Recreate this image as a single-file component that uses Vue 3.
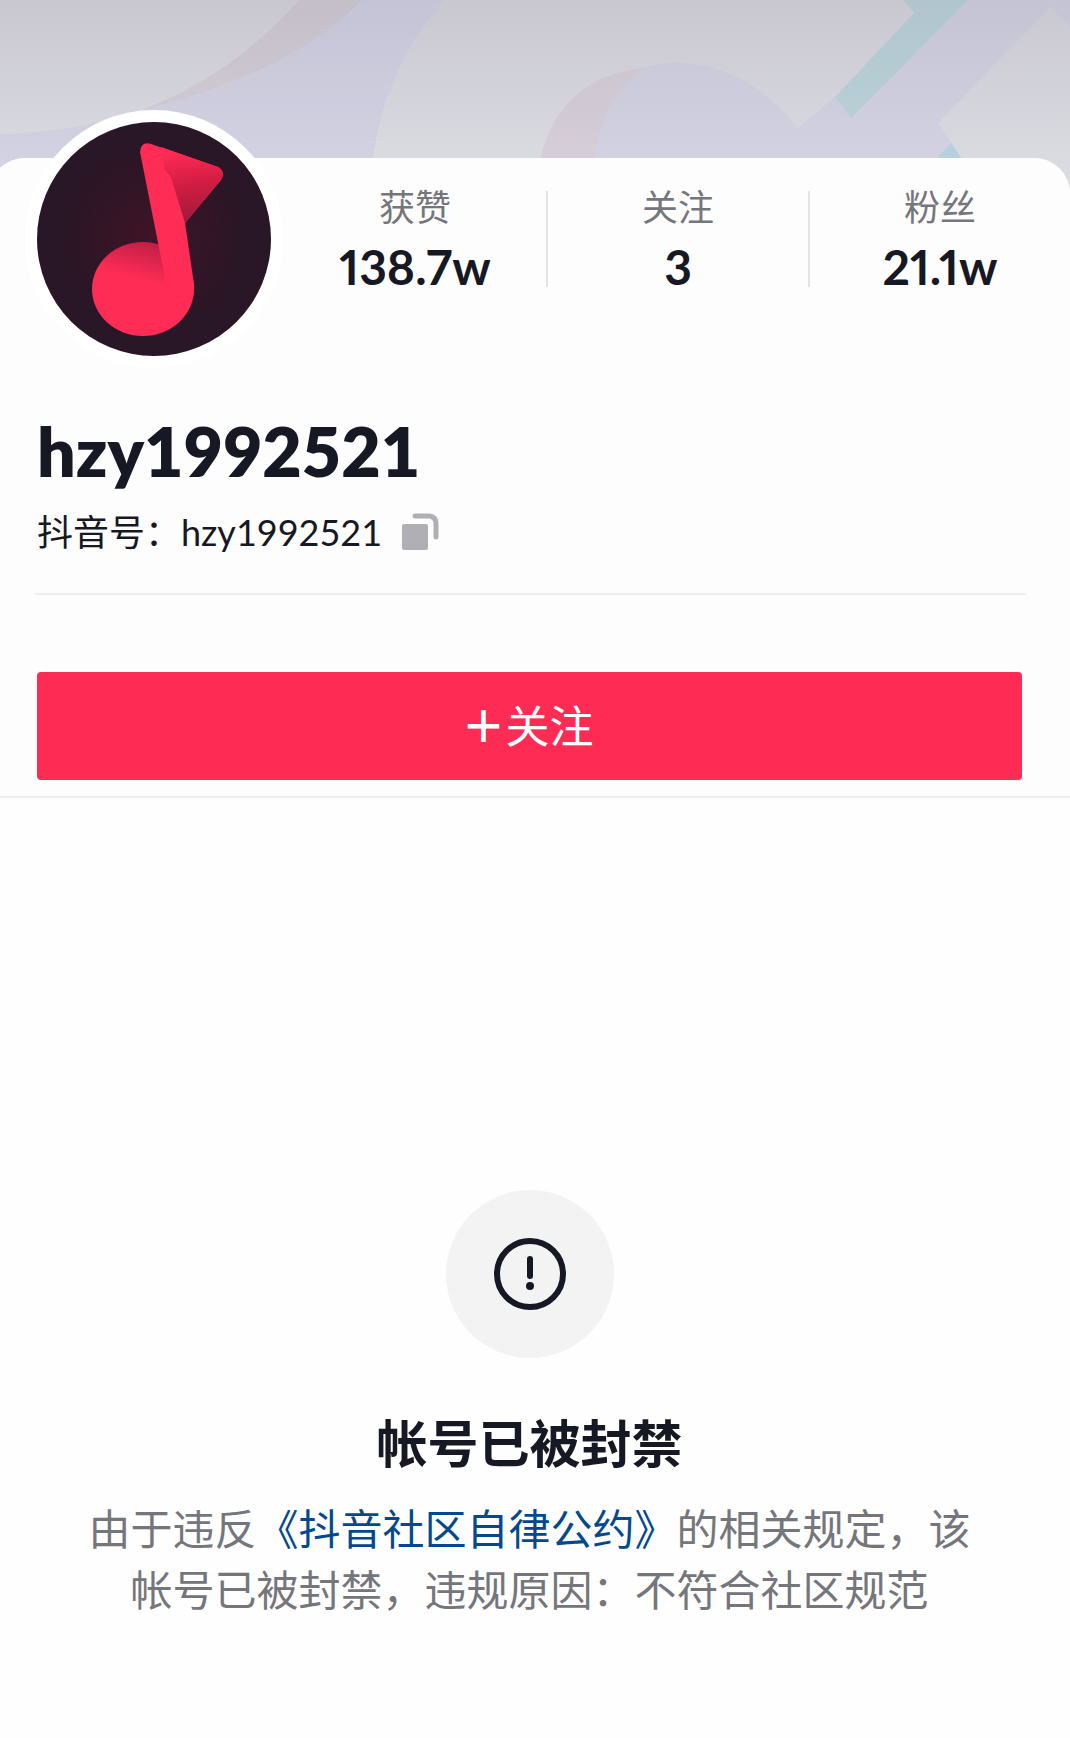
<template>
  <div class="page">
    <svg class="banner" viewBox="0 0 1070 200" preserveAspectRatio="xMidYMin slice" aria-hidden="true">
      <defs>
        <linearGradient id="shade" x1="0" y1="0" x2="0" y2="1">
          <stop offset="0" stop-color="#c9c8d1" />
          <stop offset="0.8" stop-color="#dadae1" />
          <stop offset="1" stop-color="#dddde4" />
        </linearGradient>
      </defs>
      <rect width="1070" height="200" fill="url(#shade)" />
      <path d="M0 134Q80 132 150 108C206 94 300 64 362 0H445Q372 80 370 200H0Z" fill="#b8b8e8" opacity="0.22" />
      <path d="M142 110C200 87 249 56 299 0H362C300 64 206 94 142 110Z" fill="#b49aac" opacity="0.2" />
      <path
        d="M594 200V157Q600 104 643 68Q660 63 678 63Q746 64 798 128L835 97L851 118L968 0H1070V27L1050 7L938 123L990 200Z"
        fill="#b8b4e4"
        opacity="0.22"
      />
      <path d="M535 200Q540 80 643 68Q600 104 594 157V200Z" fill="#c29ab4" opacity="0.18" />
      <path d="M835 97L914 13L903 0H968L851 118Z" fill="#7dc2c8" opacity="0.32" />
      <path d="M951 143L938 157V200H990Z" fill="#8fd0de" opacity="0.4" />
    </svg>

    <main class="sheet">
      <section class="profile">
        <div class="top">
          <svg class="avatar" viewBox="0 0 259 259" role="img" aria-label="头像">
            <defs>
              <radialGradient id="disc">
                <stop offset="0" stop-color="#3f1426" />
                <stop offset="0.8" stop-color="#291626" />
              </radialGradient>
              <linearGradient id="flag" gradientUnits="userSpaceOnUse" x1="158" y1="112" x2="150" y2="42">
                <stop offset="0" stop-color="#a01a3a" />
                <stop offset="0.55" stop-color="#d41d42" />
                <stop offset="1" stop-color="#ff2c55" />
              </linearGradient>
              <linearGradient id="head" gradientUnits="userSpaceOnUse" x1="130" y1="124" x2="119" y2="170">
                <stop offset="0" stop-color="#b01c43" />
                <stop offset="1" stop-color="#ff2c55" />
              </linearGradient>
            </defs>
            <circle cx="129" cy="129" r="129" fill="#fff" />
            <circle cx="129" cy="129" r="117" fill="url(#disc)" />
            <ellipse cx="118" cy="179" rx="51" ry="47" fill="url(#head)" />
            <path
              d="M115 42Q116 31 126 34L193 57Q201 62 196 70L160 113L169 174Q170 186 164 195L142 178Z"
              fill="#ff2c55"
            />
            <path d="M136 37L193 57Q201 62 196 70L160 113L148 74Q146 66 140 60Z" fill="url(#flag)" />
          </svg>
          <dl class="stats">
            <div v-for="s in stats" :key="s.label" class="stat">
              <dt>{{ s.label }}</dt>
              <dd>{{ s.value }}</dd>
            </div>
          </dl>
        </div>

        <h1 class="name">{{ account }}</h1>
        <div class="account">
          <span>抖音号：{{ account }}</span>
          <button class="copy" type="button" aria-label="复制抖音号" @click="copyId">
            <svg viewBox="0 0 36 36">
              <rect x="0" y="10" width="26" height="26" rx="2" fill="#b0afb5" />
              <path d="M13 2H26Q34 2 34 10V23" fill="none" stroke="#b0afb5" stroke-width="5" stroke-linecap="round" />
            </svg>
          </button>
        </div>
        <hr class="line" />
        <button class="follow" type="button"><b>＋</b>关注</button>
      </section>

      <section class="banned">
        <div class="badge">
          <svg viewBox="0 0 72 72" aria-hidden="true">
            <circle cx="36" cy="36" r="33" fill="none" stroke="#161823" stroke-width="6" />
            <path d="M36 21V38" stroke="#161823" stroke-width="6" stroke-linecap="round" />
            <circle cx="36" cy="48" r="4" fill="#161823" />
          </svg>
        </div>
        <h2>帐号已被封禁</h2>
        <p>由于违反<a href="#">《抖音社区自律公约》</a>的相关规定，该帐号已被封禁，违规原因：不符合社区规范</p>
      </section>
    </main>
  </div>
</template>

<script setup>
const account = 'hzy1992521'
const stats = [
  { label: '获赞', value: '138.7w' },
  { label: '关注', value: '3' },
  { label: '粉丝', value: '21.1w' }
]

const copyId = () => navigator.clipboard?.writeText(account)
</script>

<style>
body { margin: 0; background: #fefefe; }
</style>

<style scoped>
.page {
  min-height: 100vh; overflow: hidden; background: #fefefe; color: #161823;
  font-family: Lato, "Noto Sans CJK SC", sans-serif;
}
.banner { display: block; width: 100%; height: 200px; }

/* the sheet starts a little off the left edge of the screen */
.sheet { position: relative; margin: -42px 0 0 -11px; background: #fefefe; border-radius: 36px 36px 0 0; }
.profile { padding: 0 48px 16px; background: #fdfdfd; border-bottom: 2px solid #efeff0; border-radius: 36px 36px 0 0; }

.top { display: flex; align-items: flex-start; margin: 0 -48px 0 -12px; }
.avatar { flex: none; width: 259px; height: 259px; margin-top: -48px; }
.stats { flex: 1; display: grid; grid-template-columns: repeat(3, 1fr); margin: 33px 0 0; }
.stat { height: 96px; text-align: center; }
.stat + .stat { border-left: 2px solid #e3e3e5; }
.stat dt { font-size: 36px; line-height: 32px; color: #75767b; }
.stat dd {
  margin: 18px 0 0; font-size: 48px; line-height: 52px; font-weight: 700;
  font-variant-numeric: proportional-nums;
}

.name { margin: 42px 0 0; font-size: 68px; line-height: 80px; font-weight: 800; }
.account { display: flex; align-items: center; gap: 20px; margin-top: 17px; font-size: 36px; line-height: 48px; }
.copy { padding: 0; border: 0; background: none; cursor: pointer; }
.copy svg { display: block; width: 36px; height: 36px; overflow: visible; }
.line { height: 2px; margin: 37px -4px 0 -2px; border: 0; background: #ededee; }
.follow {
  display: block; width: 100%; height: 108px; margin-top: 77px; padding: 0 4px 4px 0; border: 0; border-radius: 4px;
  background: #fe2c55; color: #fff; font-family: inherit; font-size: 44px; font-weight: 400; cursor: pointer;
}

.banned { padding: 392px 96px 120px; text-align: center; }
.badge {
  display: flex; align-items: center; justify-content: center;
  width: 168px; height: 168px; margin: 0 auto; border-radius: 50%; background: #f3f3f3;
}
.badge svg { width: 72px; height: 72px; }
.banned h2 { margin: 50px 0 0; font-size: 51px; line-height: 72px; font-weight: 700; }
.banned p { margin: 19px 0 0; font-size: 42px; line-height: 61px; color: #75767b; }
.banned a { color: #04498d; text-decoration: none; }
</style>
